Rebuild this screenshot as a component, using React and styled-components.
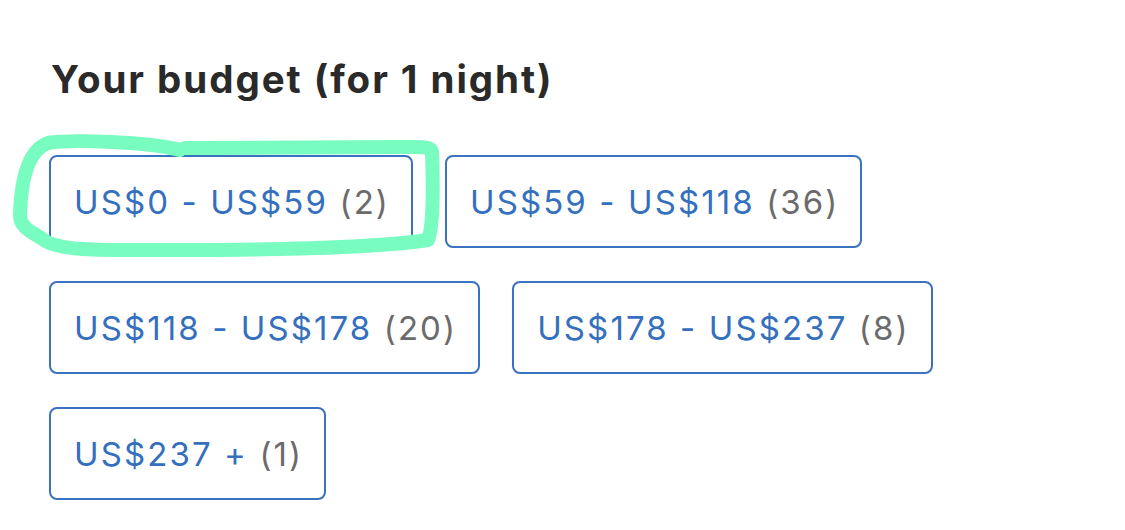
import React from "react";
import styled, { createGlobalStyle } from "styled-components";

const GlobalStyle = createGlobalStyle`
  html, body { margin: 0; padding: 0; background: #ffffff; }
  body { font-family: Inter, "Noto Sans", sans-serif; -webkit-font-smoothing: antialiased; }
`;

const Page = styled.div`
  position: relative;
  width: 1125px;
  height: 530px;
  box-sizing: border-box;
  padding: 56px 0 0 49px;
  overflow: hidden;
`;

const Heading = styled.h2`
  margin: 0 0 53px 2px;
  font-size: 38.5px;
  line-height: 46px;
  font-weight: 700;
  color: #2a2a2a;
  letter-spacing: 1.95px;
`;

const Options = styled.div`
  display: flex;
  flex-wrap: wrap;
  gap: 33px 32px;
`;

const Option = styled.button`
  box-sizing: border-box;
  height: 93px;
  display: inline-flex;
  align-items: center;
  padding: 0 21px 0 23px;
  border: 2px solid #3a72c0;
  border-radius: 8px;
  background: #fff;
  font-family: inherit;
  font-size: 33px;
  font-weight: 400;
  letter-spacing: 2.1px;
  color: #3470bd;
  cursor: pointer;
  white-space: pre;
`;

const Count = styled.span`
  color: #6b6b6b;
`;

const Highlight = styled.svg`
  position: absolute;
  left: 0;
  top: 0;
  pointer-events: none;
`;

const ranges = [
  { label: "US$0 - US$59", count: 2 },
  { label: "US$59 - US$118", count: 36 },
  { label: "US$118 - US$178", count: 20 },
  { label: "US$178 - US$237", count: 8 },
  { label: "US$237 +", count: 1 },
];

export default function App() {
  return (
    <>
      <GlobalStyle />
      <Page>
        <Heading>Your budget (for 1 night)</Heading>
        <Options>
          {ranges.map((r) => (
            <Option key={r.label}>
              {r.label} <Count>({r.count})</Count>
            </Option>
          ))}
        </Options>
        <Highlight width="1125" height="530" viewBox="0 0 1125 530">
          <path
            d="M180 150 C150 142 70 139 48 143 C28 150 21 180 20 215 C20 228 32 232 44 240 C60 252 110 250 180 250 C280 250 380 247 428 240 C434 225 433 180 432 152 C431 146 420 147 400 147 L185 148"
            fill="none"
            stroke="#78fcc0"
            strokeWidth="14"
            strokeLinecap="round"
            strokeLinejoin="round"
          />
        </Highlight>
      </Page>
    </>
  );
}
